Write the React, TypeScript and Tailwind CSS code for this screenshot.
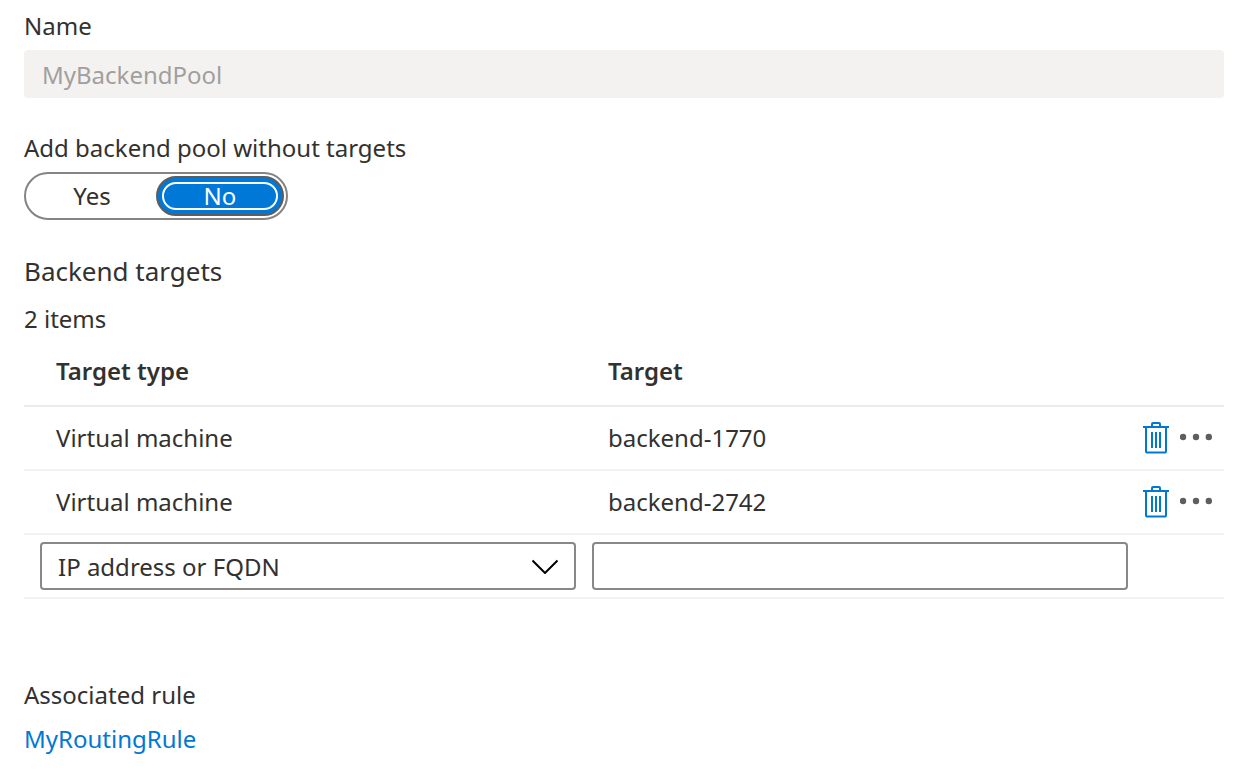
import { useState } from "react";

const targets = [
  { type: "Virtual machine", name: "backend-1770" },
  { type: "Virtual machine", name: "backend-2742" },
];

function TrashIcon() {
  return (
    <svg aria-hidden="true" className="h-8 w-[26px]" viewBox="0 0 26 32" fill="none" stroke="#0078d4" strokeWidth="2">
      <path d="M0 5H26M9 5V2Q9 1 10 1H16Q17 1 17 2V5M3 5V29Q3 30.600 4.600 30.600H21.400Q23 30.600 23 29V5M9 10V26M13 10V26M17 10V26" />
    </svg>
  );
}

function MoreIcon() {
  return (
    <svg aria-hidden="true" className="h-8 w-8" viewBox="0 0 32 32" fill="#605e5c">
      <circle cx="3" cy="15" r="3.2" />
      <circle cx="16" cy="15" r="3.2" />
      <circle cx="28.800" cy="15" r="3.2" />
    </svg>
  );
}

function Toggle() {
  const [value, setValue] = useState("No");
  return (
    <div
      role="group"
      aria-labelledby="without-targets"
      className="flex h-12 w-[264px] rounded-full border-2 border-[#858483] p-0.5"
    >
      {["Yes", "No"].map((option) => (
        <button
          key={option}
          type="button"
          aria-pressed={value === option}
          onClick={() => setValue(option)}
          className={
            value === option
              ? "flex flex-1 rounded-full border-2 border-[#605e5c] bg-[#0078d7] p-1 text-white"
              : "flex flex-1 rounded-full border-2 border-transparent p-1"
          }
        >
          <span
            className={
              value === option
                ? "flex h-full w-full items-center justify-center rounded-full border-2 border-white"
                : "flex h-full w-full items-center justify-center"
            }
          >
            {option}
          </span>
        </button>
      ))}
    </div>
  );
}

export default function App() {
  return (
    <main className="min-h-screen bg-white pt-2 pr-9 pb-5 pl-6 font-['Noto_Sans','Open_Sans',sans-serif] text-[24px] leading-9 text-[#323130]">
      <label htmlFor="pool-name" className="block">
        Name
      </label>
      <input
        id="pool-name"
        disabled
        defaultValue="MyBackendPool"
        className="mt-1.5 block h-12 w-full rounded-sm bg-[#f3f2f1] px-[18px] text-[#a19f9d]"
      />

      <div id="without-targets" className="mt-8 mb-1.5">
        Add backend pool without targets
      </div>
      <Toggle />

      <h2 className="mt-[33px] text-[26px]">Backend targets</h2>
      <p className="mt-3">2 items</p>

      <table className="w-full table-fixed border-separate border-spacing-0 text-left">
        <thead>
          <tr className="h-[70px] [&>*]:border-b-2 [&>*]:border-[#edebe9]">
            <th className="w-7/15 p-0 pl-8 font-semibold">Target type</th>
            <th className="p-0 pl-6 font-semibold">Target</th>
            <td className="w-[88px] p-0" />
          </tr>
        </thead>
        <tbody className="[&_td]:border-b-2 [&_td]:border-[#f3f2f1]">
          {targets.map((target) => (
            <tr key={target.name} className="h-16">
              <td className="p-0 pl-8">{target.type}</td>
              <td className="p-0 pl-6">{target.name}</td>
              <td className="p-0 pr-3">
                <div className="flex items-center justify-end gap-[11px]">
                  <button type="button" aria-label={`Delete ${target.name}`}>
                    <TrashIcon />
                  </button>
                  <button type="button" aria-label={`More actions for ${target.name}`}>
                    <MoreIcon />
                  </button>
                </div>
              </td>
            </tr>
          ))}
          <tr className="h-16">
            <td className="p-0 pr-2 pl-4">
              <div className="grid items-center">
                <select
                  aria-label="Target type"
                  className="col-start-1 row-start-1 h-12 w-full appearance-none rounded border-2 border-[#8a8886] bg-white pt-0.5 pr-14 pl-4"
                >
                  <option>IP address or FQDN</option>
                  <option>Virtual machine</option>
                </select>
                <svg
                  aria-hidden="true"
                  className="pointer-events-none col-start-1 row-start-1 mr-4 h-4 w-7 justify-self-end"
                  viewBox="0 0 28 16"
                  fill="none"
                  stroke="#000"
                  strokeWidth="2"
                >
                  <path d="M0.500 2.500L13 15L25.500 2.500" />
                </svg>
              </div>
            </td>
            <td className="p-0 px-2">
              <input
                aria-label="Target"
                className="block h-12 w-full rounded border-2 border-[#8a8886] px-4"
              />
            </td>
            <td className="p-0" />
          </tr>
        </tbody>
      </table>

      <h2 className="mt-[78px]">Associated rule</h2>
      <a href="#rule" className="mt-2 inline-block text-[#0078d4]">
        MyRoutingRule
      </a>
    </main>
  );
}
